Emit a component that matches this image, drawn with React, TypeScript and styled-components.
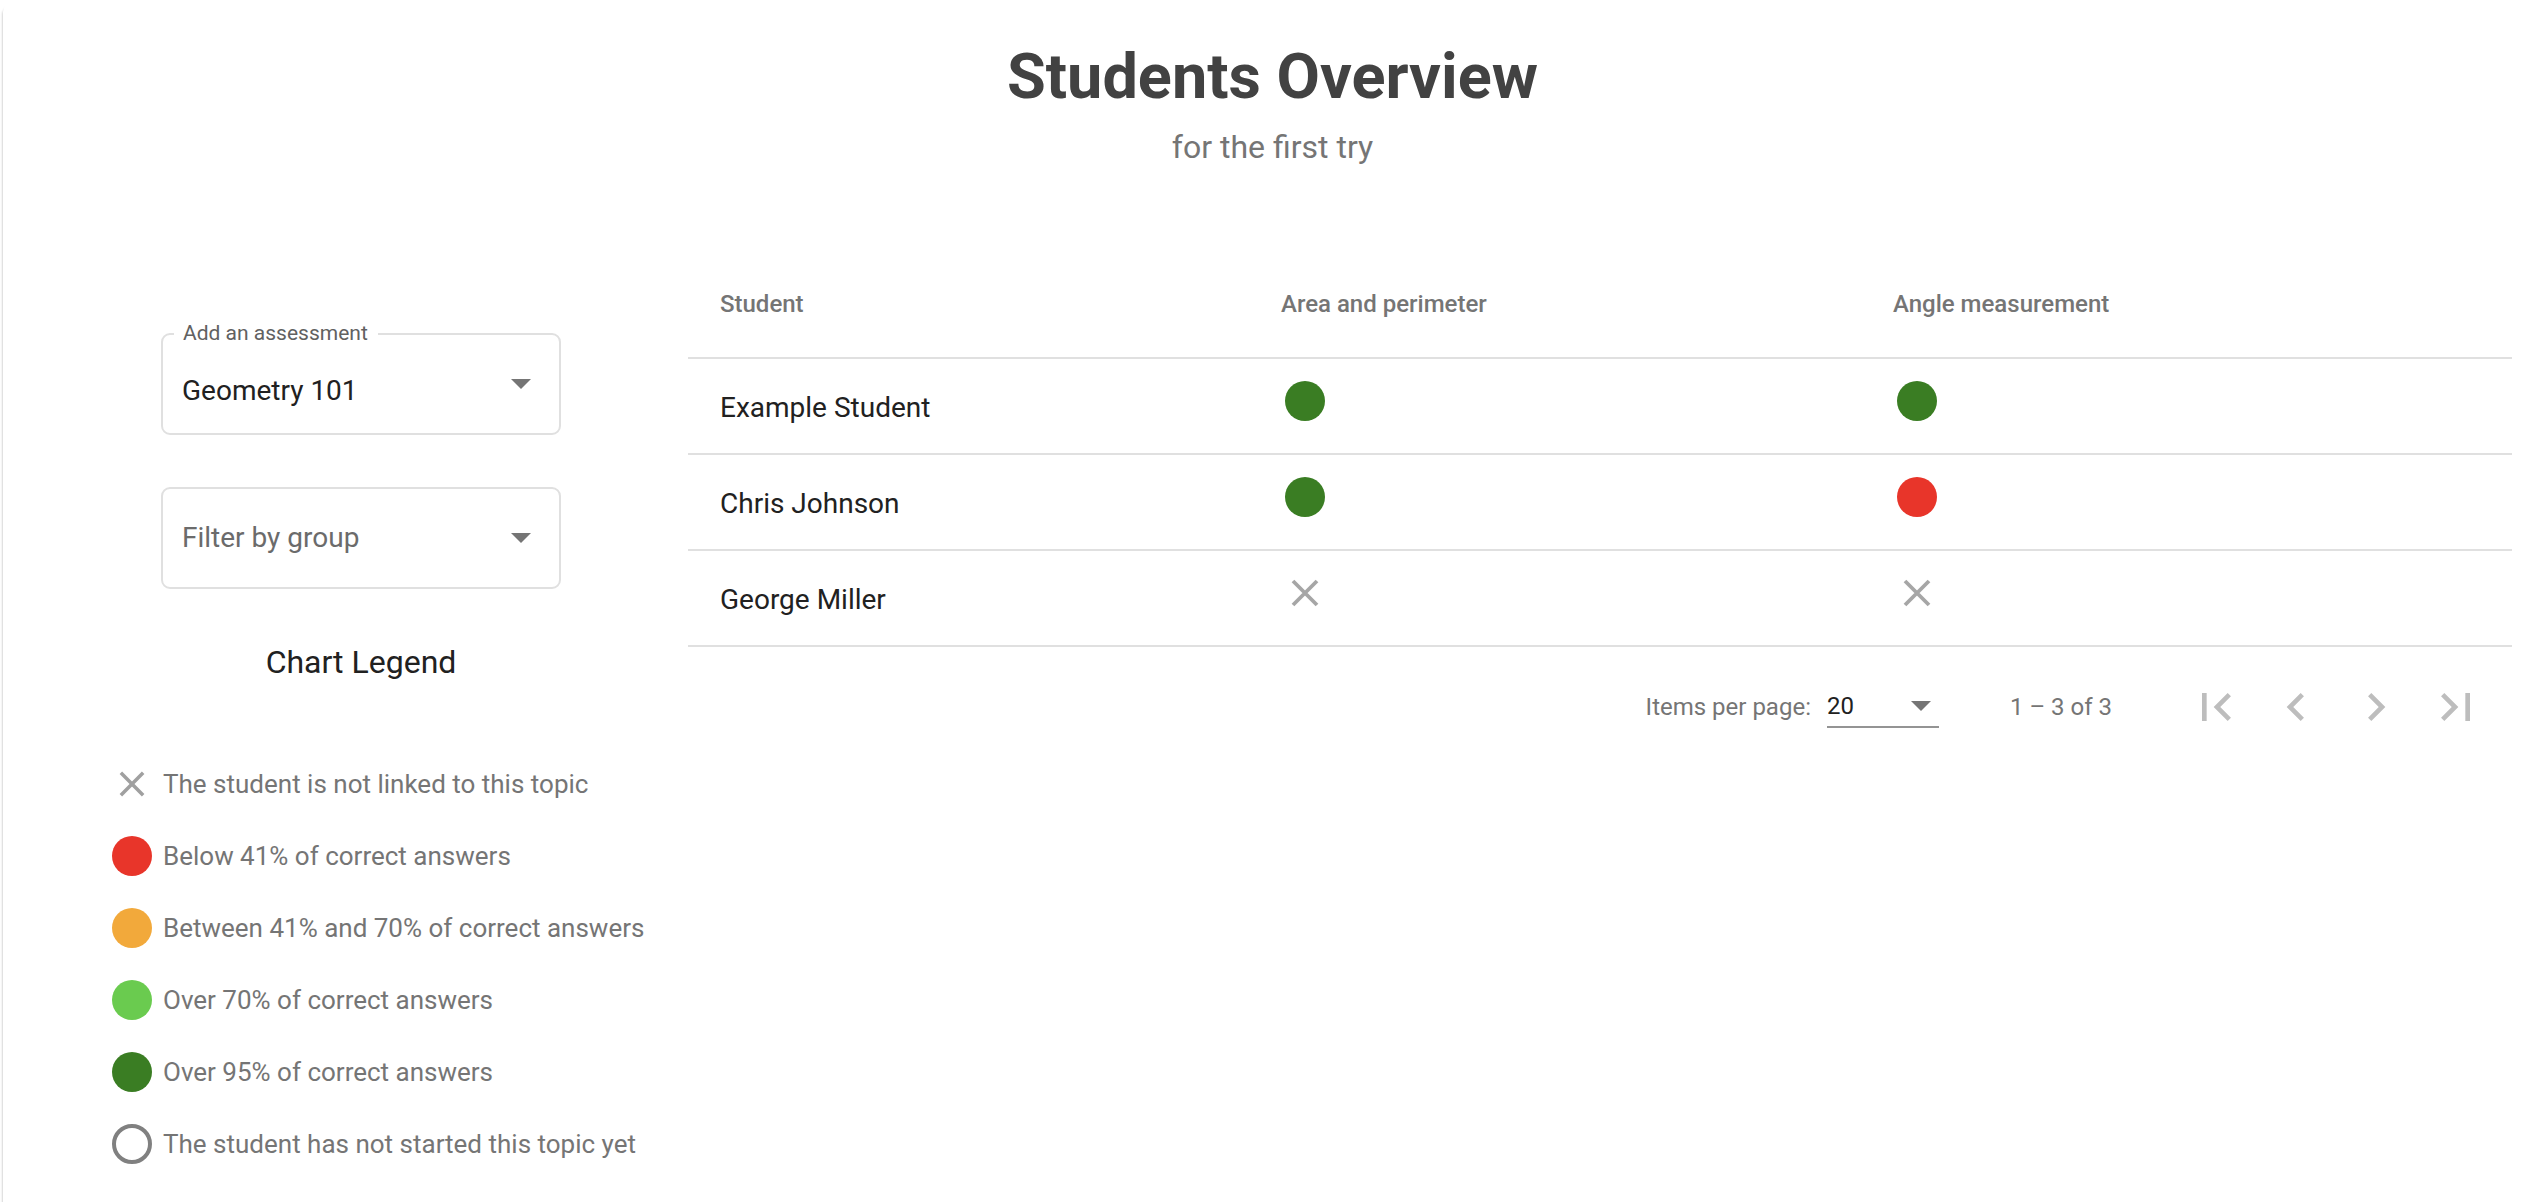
import React from "react";
import styled, { createGlobalStyle } from "styled-components";

const GlobalStyle = createGlobalStyle`
  html, body {
    margin: 0;
    padding: 0;
    background: #fff;
    font-family: Roboto, "Liberation Sans", Arial, sans-serif;
  }
  * { box-sizing: border-box; }
`;

const Card = styled.div`
  margin: 2px 0 0 3px;
  min-height: 1200px;
  padding-top: 43px;
  background: #fff;
  border-top-left-radius: 10px;
  box-shadow: -2px 3px 2px -1px rgba(0, 0, 0, 0.16);
`;

const Header = styled.header`
  display: flex;
  flex-direction: column;
  align-items: center;
  padding-left: 4px;
`;

const Title = styled.h1`
  margin: 0;
  font-size: 63px;
  line-height: 64px;
  font-weight: 700;
  color: #424242;
`;

const Subtitle = styled.p`
  margin: 22px 0 0;
  font-size: 32px;
  line-height: 32px;
  color: #757575;
`;

const Main = styled.div`
  display: flex;
  margin-top: 84px;
`;

const Sidebar = styled.aside`
  width: 685px;
  flex: none;
  padding: 86px 0 0 109px;
  display: flex;
  flex-direction: column;
`;

const FieldBox = styled.div<{ $shift?: boolean }>`
  position: relative;
  width: 400px;
  height: 102px;
  margin-left: 49px;
  border: 2px solid #e0e0e0;
  border-radius: 9px;
  display: flex;
  align-items: center;
  padding: ${(p) => (p.$shift ? "14px" : "0")} 28px 0 19px;
  & + & {
    margin-top: 52px;
  }
`;

const FloatLabel = styled.span`
  position: absolute;
  top: -14px;
  left: 11px;
  padding: 0 10px 0 9px;
  background: #fff;
  font-size: 21px;
  line-height: 24px;
  color: #616161;
`;

const FieldValue = styled.span<{ $placeholder?: boolean }>`
  flex: 1;
  font-size: 28px;
  line-height: 28px;
  color: ${(p) => (p.$placeholder ? "#6b6b6b" : "#212121")};
`;

const Caret = styled.span<{ $up?: number }>`
  width: 0;
  height: 0;
  border-left: 10px solid transparent;
  border-right: 10px solid transparent;
  border-top: 10px solid #757575;
  margin-bottom: ${(p) => p.$up ?? 0}px;
`;

const LegendTitle = styled.h2`
  width: 400px;
  margin: 57px 0 0 49px;
  text-align: center;
  font-size: 32px;
  line-height: 32px;
  font-weight: 400;
  color: #212121;
`;

const LegendList = styled.ul`
  list-style: none;
  margin: 86px 0 0;
  padding: 0;
  display: flex;
  flex-direction: column;
  gap: 32px;
`;

const LegendItem = styled.li`
  display: flex;
  align-items: center;
  height: 40px;
  gap: 11px;
  font-size: 26px;
  line-height: 40px;
  color: #757575;
`;

const Dot = styled.span<{ $color?: string }>`
  width: 40px;
  height: 40px;
  flex: none;
  border-radius: 50%;
  background: ${(p) => p.$color ?? "transparent"};
  border: ${(p) => (p.$color ? "none" : "4px solid #808080")};
`;

const IconBox = styled.span`
  width: 40px;
  height: 40px;
  flex: none;
  display: flex;
  align-items: center;
  justify-content: center;
`;

const TableArea = styled.section`
  flex: 1;
  margin-right: 26px;
`;

const Grid = styled.div`
  display: grid;
  grid-template-columns: 561px 612px 1fr;
`;

const HeadCell = styled.div`
  height: 112px;
  display: flex;
  align-items: center;
  padding: 4px 0 0 32px;
  border-bottom: 2px solid #e0e0e0;
  font-size: 24px;
  font-weight: 500;
  color: #757575;
`;

const Cell = styled.div`
  height: 96px;
  display: flex;
  align-items: center;
  padding: 2px 0 0 32px;
  border-bottom: 2px solid #e0e0e0;
  font-size: 28px;
  color: #212121;
`;

const StatusIcon = styled.span`
  width: 48px;
  height: 48px;
  display: flex;
  align-items: center;
  justify-content: center;
  margin-bottom: 12px;
`;

const Paginator = styled.div`
  height: 112px;
  display: flex;
  align-items: center;
  justify-content: flex-end;
  padding: 8px 16px 0 0;
  font-size: 24px;
  color: #757575;
`;

const PageSizeLabel = styled.span`
  line-height: 24px;
`;

const PageSelect = styled.div`
  width: 112px;
  margin-left: 16px;
  padding: 8px 8px 8px 0;
  border-bottom: 2px solid #949494;
  display: flex;
  align-items: center;
  justify-content: space-between;
  line-height: 24px;
  color: #212121;
`;

const RangeLabel = styled.span`
  margin: 0 64px 0 71px;
  line-height: 24px;
`;

const PageButton = styled.button`
  width: 80px;
  height: 80px;
  padding: 0;
  border: none;
  background: none;
  display: flex;
  align-items: center;
  justify-content: center;
  color: #bdbdbd;
`;

const Cross = ({ size, color }: { size: number; color: string }) => (
  <svg width={size} height={size} viewBox="0 0 14 14">
    <path d="M1 1L13 13M13 1L1 13" stroke={color} strokeWidth="1.9" fill="none" />
  </svg>
);

const PageIcon = ({ d }: { d: string }) => (
  <svg width="56" height="56" viewBox="0 0 24 24" fill="currentColor">
    <path d={d} />
  </svg>
);

const GREEN = "#3a7d23";
const RED = "#e8352a";

type Status = "top" | "low" | "none";

const rows: { name: string; area: Status; angle: Status }[] = [
  { name: "Example Student", area: "top", angle: "top" },
  { name: "Chris Johnson", area: "top", angle: "low" },
  { name: "George Miller", area: "none", angle: "none" },
];

const StatusCell = ({ status }: { status: Status }) => (
  <Cell>
    <StatusIcon>
      {status === "none" ? (
        <Cross size={28} color="#a6a6a6" />
      ) : (
        <Dot $color={status === "top" ? GREEN : RED} />
      )}
    </StatusIcon>
  </Cell>
);

const legend = [
  { color: RED, text: "Below 41% of correct answers" },
  { color: "#f2a93b", text: "Between 41% and 70% of correct answers" },
  { color: "#6acb4f", text: "Over 70% of correct answers" },
  { color: GREEN, text: "Over 95% of correct answers" },
];

const App = () => {
  return (
    <>
      <GlobalStyle />
      <Card>
        <Header>
          <Title>Students Overview</Title>
          <Subtitle>for the first try</Subtitle>
        </Header>
        <Main>
          <Sidebar>
            <FieldBox $shift>
              <FloatLabel>Add an assessment</FloatLabel>
              <FieldValue>Geometry 101</FieldValue>
              <Caret $up={14} />
            </FieldBox>
            <FieldBox>
              <FieldValue $placeholder>Filter by group</FieldValue>
              <Caret />
            </FieldBox>
            <LegendTitle>Chart Legend</LegendTitle>
            <LegendList>
              <LegendItem>
                <IconBox>
                  <Cross size={26} color="#a0a0a0" />
                </IconBox>
                The student is not linked to this topic
              </LegendItem>
              {legend.map((l) => (
                <LegendItem key={l.text}>
                  <Dot $color={l.color} />
                  {l.text}
                </LegendItem>
              ))}
              <LegendItem>
                <Dot />
                The student has not started this topic yet
              </LegendItem>
            </LegendList>
          </Sidebar>
          <TableArea>
            <Grid>
              <HeadCell>Student</HeadCell>
              <HeadCell>Area and perimeter</HeadCell>
              <HeadCell>Angle measurement</HeadCell>
              {rows.map((r) => (
                <React.Fragment key={r.name}>
                  <Cell>{r.name}</Cell>
                  <StatusCell status={r.area} />
                  <StatusCell status={r.angle} />
                </React.Fragment>
              ))}
            </Grid>
            <Paginator>
              <PageSizeLabel>Items per page:</PageSizeLabel>
              <PageSelect>
                <span>20</span>
                <Caret />
              </PageSelect>
              <RangeLabel>1 – 3 of 3</RangeLabel>
              <PageButton aria-label="First page">
                <PageIcon d="M18.41 16.59L13.82 12l4.59-4.59L17 6l-6 6 6 6zM6 6h2v12H6z" />
              </PageButton>
              <PageButton aria-label="Previous page">
                <PageIcon d="M15.41 7.41L14 6l-6 6 6 6 1.41-1.41L10.83 12z" />
              </PageButton>
              <PageButton aria-label="Next page">
                <PageIcon d="M10 6L8.59 7.41 13.17 12l-4.58 4.59L10 18l6-6z" />
              </PageButton>
              <PageButton aria-label="Last page">
                <PageIcon d="M5.59 7.41L10.18 12l-4.59 4.59L7 18l6-6-6-6zM16 6h2v12h-2z" />
              </PageButton>
            </Paginator>
          </TableArea>
        </Main>
      </Card>
    </>
  );
};

export default App;
